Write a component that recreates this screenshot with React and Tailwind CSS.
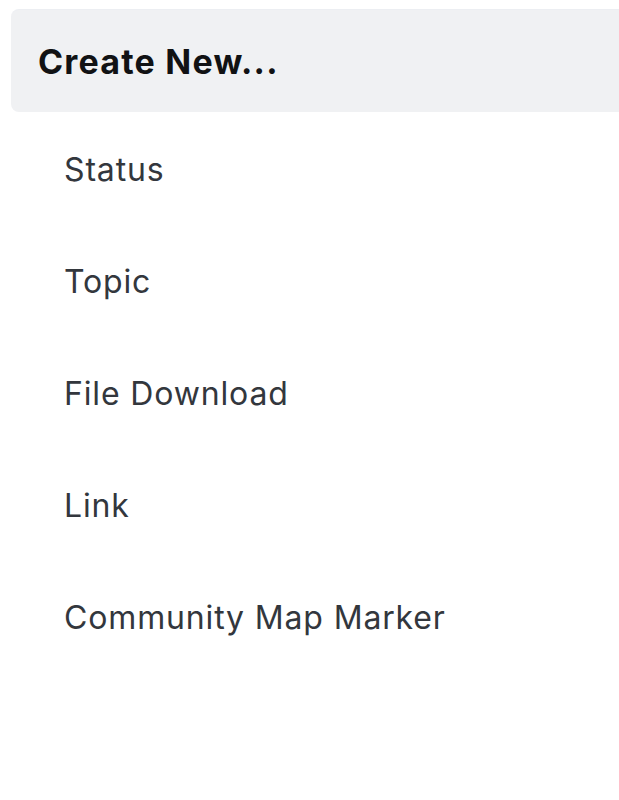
import React from "react";

const items = ["Status", "Topic", "File Download", "Link", "Community Map Marker"];

export default function App() {
  return (
    <div
      className="min-h-screen bg-white overflow-hidden"
      style={{ fontFamily: "Inter, 'Noto Sans', sans-serif" }}
    >
      <div className="pt-[9px] pl-[11px]">
        {/* header */}
        <div className="h-[103px] w-[640px] flex items-center pl-[27px] bg-[#f0f1f3] rounded-l-lg border-t border-[#eceef2]">
          <h2 className="text-[34px] font-bold text-[#111214] tracking-[1.2px]">
            Create New...
          </h2>
        </div>
      </div>

      <ul className="pt-[2px]">
        {items.map((item) => (
          <li
            key={item}
            className="h-[112px] flex items-center pl-[64px] text-[32px] text-[#33373d] tracking-[0.85px]"
          >
            {item}
          </li>
        ))}
      </ul>
    </div>
  );
}
